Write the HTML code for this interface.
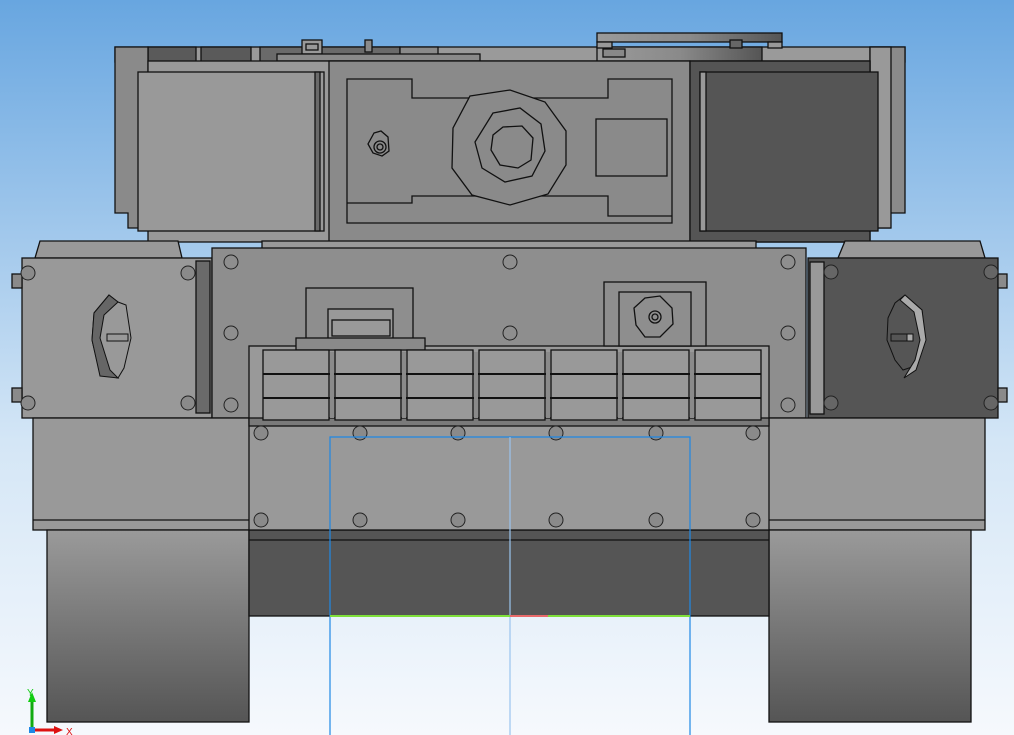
<!DOCTYPE html><html><head><style>html,body{margin:0;padding:0;width:1014px;height:735px;overflow:hidden}svg{display:block}</style></head><body>
<svg width="1014" height="735" viewBox="0 0 1014 735" xmlns="http://www.w3.org/2000/svg" font-family="Liberation Sans, sans-serif">
<defs>
<linearGradient id="bg" x1="0" y1="0" x2="0" y2="1"><stop offset="0" stop-color="#68a6e0"/><stop offset="0.6" stop-color="#d4e6f6"/><stop offset="1" stop-color="#f6f9fd"/></linearGradient>
<linearGradient id="tr" x1="0" y1="0" x2="0" y2="1"><stop offset="0" stop-color="#9a9a9a"/><stop offset="1" stop-color="#555"/></linearGradient>
<linearGradient id="top" x1="0" y1="0" x2="1" y2="0"><stop offset="0" stop-color="#9a9a9a"/><stop offset="0.5" stop-color="#8a8a8a"/><stop offset="1" stop-color="#555"/></linearGradient>
</defs>
<rect width="1014" height="735" fill="url(#bg)"/>
<g stroke="#111" stroke-width="1.3">
<rect x="115" y="47" width="790" height="15" fill="#9a9a9a"/>
<rect x="148" y="47" width="48" height="15" fill="#5a5a5a"/>
<rect x="201" y="47" width="50" height="15" fill="#5a5a5a"/>
<rect x="260" y="47" width="140" height="15" fill="#6a6a6a"/>
<rect x="400" y="47" width="38" height="15" fill="#8a8a8a"/>
<rect x="597" y="47" width="165" height="15" fill="url(#top)"/>
<rect x="597" y="33" width="185" height="9" fill="url(#top)"/>
<rect x="597" y="42" width="15" height="6" fill="#999"/><rect x="768" y="42" width="14" height="6" fill="#999"/>
<rect x="730" y="40" width="12" height="8" fill="#666"/>
<rect x="603" y="49" width="22" height="8" fill="#888"/>
<rect x="302" y="40" width="20" height="14" fill="#999"/><rect x="306" y="44" width="12" height="6" fill="#999"/>
<rect x="365" y="40" width="7" height="12" fill="#8a8a8a"/>
<rect x="277" y="54" width="203" height="7" fill="#8a8a8a"/>
<path d="M115 47H148V228H128V213H115Z" fill="#8a8a8a"/>
<path d="M870 47H905V213H890V228H870Z" fill="#8a8a8a"/>
<rect x="870" y="47" width="21" height="181" fill="#999"/>
<rect x="148" y="61" width="722" height="181" fill="#999"/>
<rect x="329" y="61" width="361" height="181" fill="#8a8a8a"/>
<rect x="690" y="61" width="180" height="181" fill="#555"/>
<rect x="138" y="72" width="186" height="159" fill="#999"/>
<rect x="315" y="72" width="5" height="159" fill="#6a6a6a"/>
<rect x="700" y="72" width="178" height="159" fill="#555"/>
<rect x="700" y="72" width="6" height="159" fill="#999"/>
<path d="M347 79H412V98H608V79H672V223H347Z" fill="#8a8a8a"/>
<path d="M347 203H412V196H608V216H672" fill="none"/>
<rect x="596" y="119" width="71" height="57" fill="#8a8a8a"/>
<polygon points="470,96 510,90 545,102 566,131 566,165 548,194 510,205 472,195 452,168 453,128" fill="#8a8a8a"/>
<polygon points="493,113 520,108 541,124 545,151 532,176 505,182 482,168 475,142" fill="#8a8a8a"/>
<polygon points="503,127 522,126 533,138 531,160 518,168 500,165 491,150 493,135" fill="#8a8a8a"/>
<polygon points="374,133 381,131 388,137 389,151 382,156 373,153 368,144" fill="#8a8a8a"/>
<circle cx="380" cy="147" r="6" fill="none"/><circle cx="380" cy="147" r="3" fill="none"/>
<path d="M40 241H178L182 258H35Z" fill="#999"/>
<path d="M845 241H980L985 258H838Z" fill="#999"/>
<rect x="262" y="241" width="494" height="8" fill="#999"/>
<rect x="22" y="258" width="190" height="160" fill="#999"/>
<rect x="196" y="261" width="14" height="152" fill="#6a6a6a"/>
<rect x="12" y="274" width="10" height="14" fill="#8a8a8a"/><rect x="12" y="388" width="10" height="14" fill="#8a8a8a"/>
<rect x="808" y="258" width="190" height="160" fill="#555"/>
<rect x="810" y="262" width="14" height="152" fill="#999"/>
<rect x="998" y="274" width="9" height="14" fill="#8a8a8a"/><rect x="998" y="388" width="9" height="14" fill="#8a8a8a"/>
<rect x="212" y="248" width="594" height="170" fill="#8e8e8e"/>
<rect x="33" y="418" width="952" height="112" fill="#999"/>
<line x1="33" y1="520" x2="985" y2="520"/>
<rect x="47" y="530" width="202" height="192" fill="url(#tr)"/>
<rect x="769" y="530" width="202" height="192" fill="url(#tr)"/>
<rect x="249" y="530" width="520" height="86" fill="#555"/>
<line x1="249" y1="540" x2="769" y2="540"/>
<rect x="249" y="346" width="520" height="184" fill="#999"/>
<rect x="249" y="418" width="520" height="8" fill="#7a7a7a"/>
<rect x="306" y="288" width="107" height="58" fill="#8e8e8e"/>
<rect x="328" y="309" width="65" height="37" fill="#999"/>
<rect x="332" y="320" width="58" height="16" fill="#999"/>
<rect x="296" y="338" width="129" height="12" fill="#8a8a8a"/>
<rect x="604" y="282" width="102" height="64" fill="#8e8e8e"/>
<rect x="619" y="292" width="72" height="54" fill="#8e8e8e"/>
<polygon points="645,298 660,296 672,308 673,324 660,337 645,337 636,325 634,308" fill="#8e8e8e"/>
<circle cx="655" cy="317" r="6" fill="none"/><circle cx="655" cy="317" r="3" fill="none"/>
</g>
<g stroke="#111" stroke-width="1.3" fill="#999">
<rect x="263" y="350" width="66" height="70"/><rect x="335" y="350" width="66" height="70"/><rect x="407" y="350" width="66" height="70"/><rect x="479" y="350" width="66" height="70"/><rect x="551" y="350" width="66" height="70"/><rect x="623" y="350" width="66" height="70"/><rect x="695" y="350" width="66" height="70"/>
</g>
<g stroke="#111" stroke-width="2">
<line x1="263" y1="374" x2="761" y2="374"/><line x1="263" y1="398" x2="761" y2="398"/>
</g>
<g fill="#8a8a8a"><rect x="330" y="352" width="4" height="66"/><rect x="402" y="352" width="4" height="66"/><rect x="474" y="352" width="4" height="66"/><rect x="546" y="352" width="4" height="66"/><rect x="618" y="352" width="4" height="66"/><rect x="690" y="352" width="4" height="66"/></g>
<g stroke="#222" stroke-width="1" fill="#8e8e8e">
<circle cx="231" cy="262" r="7"/><circle cx="231" cy="333" r="7"/><circle cx="231" cy="405" r="7"/>
<circle cx="510" cy="262" r="7"/><circle cx="510" cy="333" r="7"/>
<circle cx="788" cy="262" r="7"/><circle cx="788" cy="333" r="7"/><circle cx="788" cy="405" r="7"/>
<g fill="#8a8a8a"><circle cx="28" cy="273" r="7"/><circle cx="28" cy="403" r="7"/><circle cx="188" cy="273" r="7"/><circle cx="188" cy="403" r="7"/></g>
<g fill="#666"><circle cx="831" cy="272" r="7"/><circle cx="831" cy="403" r="7"/><circle cx="991" cy="272" r="7"/><circle cx="991" cy="403" r="7"/></g>
<g fill="#8a8a8a"><circle cx="261" cy="433" r="7"/><circle cx="360" cy="433" r="7"/><circle cx="458" cy="433" r="7"/><circle cx="556" cy="433" r="7"/><circle cx="656" cy="433" r="7"/><circle cx="753" cy="433" r="7"/>
<circle cx="261" cy="520" r="7"/><circle cx="360" cy="520" r="7"/><circle cx="458" cy="520" r="7"/><circle cx="556" cy="520" r="7"/><circle cx="656" cy="520" r="7"/><circle cx="753" cy="520" r="7"/></g>
</g>
<g stroke="#111" stroke-width="1">
<polygon points="109,295 118,302 126,305 131,338 124,368 118,378 100,374 92,340 94,313" fill="#999"/>
<path d="M109,295 L118,302 L104,315 L100,338 L110,370 L118,378 L100,376 L92,340 L94,313Z" fill="#666"/>
<rect x="107" y="334" width="21" height="7" fill="#999"/>
<polygon points="905,295 895,303 888,318 887,340 895,360 903,370 915,366 925,340 922,310" fill="#555"/>
<path d="M905,295 L922,310 L926,340 L916,370 L904,378 L915,360 L920,340 L914,312 L900,300Z" fill="#aaa"/>
<rect x="891" y="334" width="22" height="7" fill="#555"/><rect x="907" y="334" width="6" height="7" fill="#aaa"/>
</g>
<g stroke="#1e88e5" stroke-width="1.2" fill="none">
<path d="M330 735V437H690V735"/><line x1="510" y1="437" x2="510" y2="735" stroke="#9ac4ee"/>
</g>
<line x1="330" y1="616" x2="690" y2="616" stroke="#7ee03a" stroke-width="2"/>
<line x1="510" y1="616" x2="548" y2="616" stroke="#e86a6a" stroke-width="2"/>
<line x1="32" y1="728" x2="32" y2="698" stroke="#1a1" stroke-width="3"/>
<polygon points="28,702 32,692 36,702" fill="#1c1"/>
<line x1="32" y1="730" x2="60" y2="730" stroke="#d11" stroke-width="3"/>
<polygon points="54,726 63,730 54,734" fill="#d11"/>
<rect x="29" y="727" width="6" height="6" fill="#1e88e5"/>
<text x="27" y="696" font-size="10" fill="#1c1">Y</text>
<text x="66" y="735" font-size="10" fill="#d11">X</text>
</svg>
</body></html>
